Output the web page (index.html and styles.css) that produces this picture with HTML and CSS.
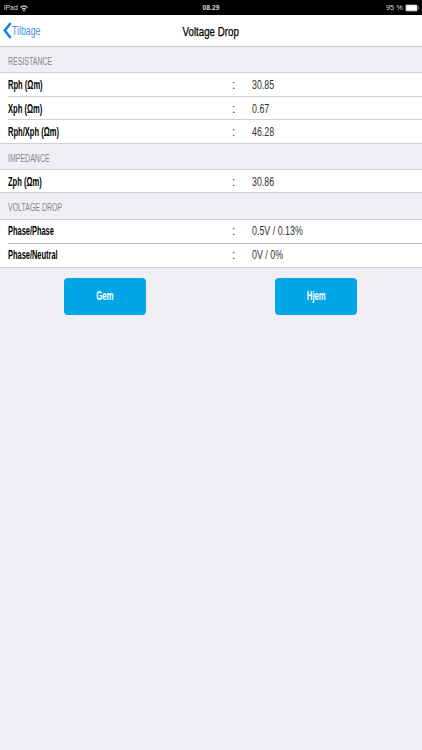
FILE: index.html
```
<!DOCTYPE html>
<html lang="da">
<head>
<meta charset="utf-8">
<title>Voltage Drop</title>
<link rel="stylesheet" href="styles.css">
</head>
<body>
<header class="status">
  <div class="device"><span class="t">iPad</span>
    <svg class="wifi" width="8" height="7" viewBox="0 0 8 7" fill="none" stroke="#ddd" stroke-width="1.1"><path d="M.5 2.6Q4-.8 7.5 2.6M2 4.3Q4 2.4 6 4.3"/><path d="M2.9 5.2L4 6.7 5.1 5.2Q4 4.3 2.9 5.2Z" fill="#ddd" stroke="none"/></svg>
  </div>
  <div class="clock"><span class="t">08.29</span></div>
  <div class="power"><span class="t">95 %</span>
    <svg width="14" height="8" viewBox="0 0 14 8"><rect x=".4" y=".4" width="12.2" height="7" rx="1" fill="#888"/><rect x="1.2" y="1.2" width="10.6" height="5.4" fill="#fff"/><path d="M13 2.5h.8v2.8H13z" fill="#aaa"/></svg>
  </div>
</header>
<nav class="nav">
  <div class="back"><svg width="9" height="17" viewBox="0 0 9 17"><path d="M7.7 1L1.8 8.5 7.7 16" fill="none" stroke="#1180f5" stroke-width="2.5"/></svg><span class="t">Tilbage</span></div>
  <h1 class="title"><span class="t">Voltage Drop</span></h1>
</nav>
<main>
  <h2 class="section"><span class="t">RESISTANCE</span></h2>
  <div class="group">
    <div class="row"><span class="label t">Rph (Ωm)</span><span class="colon t">:</span><span class="value t">30.85</span></div>
    <div class="row"><span class="label t">Xph (Ωm)</span><span class="colon t">:</span><span class="value t">0.67</span></div>
    <div class="row tall"><span class="label t">Rph/Xph (Ωm)</span><span class="colon t">:</span><span class="value t">46.28</span></div>
  </div>
  <h2 class="section"><span class="t">IMPEDANCE</span></h2>
  <div class="group impedance">
    <div class="row"><span class="label t">Zph (Ωm)</span><span class="colon t">:</span><span class="value t">30.86</span></div>
  </div>
  <h2 class="section drop"><span class="t">VOLTAGE DROP</span></h2>
  <div class="group phases">
    <div class="row"><span class="label t">Phase/Phase</span><span class="colon t">:</span><span class="value t">0.5V / 0.13%</span></div>
    <div class="row tall"><span class="label t">Phase/Neutral</span><span class="colon t">:</span><span class="value t">0V / 0%</span></div>
  </div>
  <div class="actions">
    <button class="btn"><span class="t">Gem</span></button>
    <button class="btn"><span class="t">Hjem</span></button>
  </div>
</main>
</body>
</html>
```
FILE: styles.css
```
* { box-sizing: border-box; }
body {
  margin: 0;
  min-height: 750px;
  background: #efeef5;
  font-family: "Liberation Sans", sans-serif;
  color: #000;
}
h1, h2 { margin: 0; font-weight: 400; }
.t { display: inline-block; white-space: pre; transform-origin: 0 50%; }

.status {
  display: grid;
  grid-template-columns: 1fr 1fr 1fr;
  height: 15px;
  padding: 0 3px 0 4px;
  background: #000;
  color: #ddd;
  font-size: 8px;
  line-height: 16px;
}
.status > div { display: flex; align-items: center; }
.device .t { transform: scaleX(.86); }
.wifi { margin-left: 0; }
.clock { justify-content: center; font-weight: 700; }
.clock .t { transform: scaleX(.84); transform-origin: 50% 50%; }
.power { justify-content: flex-end; }
.power .t { transform: scaleX(.92); margin-right: 1px; }

.nav {
  display: grid;
  grid-template-columns: 1fr 1fr 1fr;
  align-items: center;
  height: 32px;
  background: #fff;
  border-bottom: 1px solid #c2c2c4;
}
.back { display: flex; align-items: center; padding-left: 3px; color: #3f94ef; font-size: 12px; }
.back .t { transform: scaleX(.73); }
.title { grid-column: 2; text-align: center; font-size: 12px; line-height: 34px; height: 31px; -webkit-text-stroke: .25px #000; }
.title .t { transform: scaleX(.81); transform-origin: 50% 50%; }

.section { height: 25px; padding-left: 8px; font-size: 10px; line-height: 29px; color: #88888d; }
.section .t { transform: scaleX(.7); }
.section.drop { height: 26px; }

.group { background: #fff; border-top: 1px solid #cfced3; border-bottom: 1px solid #cfced3; }
.row {
  display: grid;
  grid-template-columns: 224px 20px 1fr;
  height: 23px;
  margin-left: 8px;
  font-size: 12.5px;
  line-height: 24px;
}
.row + .row { border-top: 1px solid #cfced3; }
.row.tall { height: 24px; }
.impedance .row { height: 22px; }
.phases .row { line-height: 22px; }
.phases .row + .row { border-top-color: #bdbdc0; line-height: 23px; }
.label { font-weight: 700; transform: scaleX(.605); }
.phases .label { transform: scaleX(.595); }
.colon { color: #333; font-size: 12px; }
.value { color: #333; transform: scaleX(.71); }

.actions { display: flex; justify-content: space-between; padding: 10px 65px 0 64px; }
.btn {
  width: 82px;
  height: 37px;
  padding: 0;
  border: 0;
  border-radius: 4px;
  background: #03a5e9;
  color: #fff;
  font: 700 12.5px/37px "Liberation Sans", sans-serif;
}
.btn .t { transform: scaleX(.62); transform-origin: 50% 50%; }
```
